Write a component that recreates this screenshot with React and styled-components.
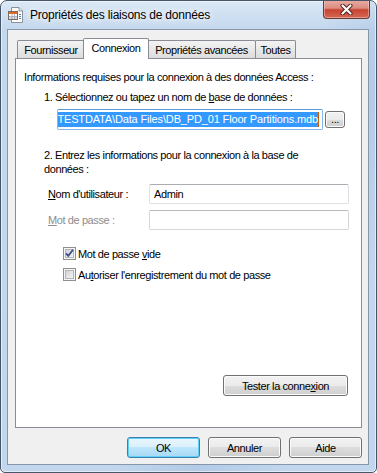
import styled, { createGlobalStyle } from "styled-components"

const GlobalStyle = createGlobalStyle`
    html, body {
        margin: 0;
        padding: 0;
        background: #ffffff;
    }
    body {
        font-family: "Liberation Sans", Arial, sans-serif;
        font-size: 11px;
        letter-spacing: -0.4px;
        color: #000000;
    }
`

const tabs = [
    { label: "Fournisseur", width: 68 },
    { label: "Connexion", width: 66, active: true },
    { label: "Propriétés avancées", width: 109 },
    { label: "Toutes", width: 41 },
]

function AppIcon() {
    return (
        <svg width="16" height="16" viewBox="0 0 16 16">
            <path d="M3.5 0.5 H11 L14.5 4 V15.5 H3.5 Z" fill="#fdfdfd" stroke="#8a8f98" />
            <path d="M11 0.5 V4 H14.5" fill="#e6e8ec" stroke="#8a8f98" />
            <rect x="0.5" y="4.5" width="9" height="8" fill="#ffffff" stroke="#7d6a5a" />
            <rect x="1" y="5" width="8" height="2" fill="#e06a2a" />
            <path d="M1 9.5 H9 M1 11 H9 M4 7 V12 M6.5 7 V12" stroke="#9aa6b8" strokeWidth="0.8" />
            <path d="M11 7.5 H13 M11 9.5 H13 M11 11.5 H13" stroke="#5b7fb8" />
        </svg>
    )
}

function CloseGlyph() {
    return (
        <svg width="13" height="11" viewBox="0 0 13 11">
            <path d="M2.5 1.5 L10.5 9.5 M10.5 1.5 L2.5 9.5" stroke="#4a1f1a" strokeWidth="4" strokeLinecap="round" />
            <path d="M2.5 1.5 L10.5 9.5 M10.5 1.5 L2.5 9.5" stroke="#ffffff" strokeWidth="2.2" strokeLinecap="round" />
        </svg>
    )
}

function CheckBox({ checked }) {
    return (
        <svg width="13" height="13" viewBox="0 0 13 13">
            <defs>
                <linearGradient id="cbfill" x1="0" y1="0" x2="1" y2="1">
                    <stop offset="0" stopColor="#cdd0d4" />
                    <stop offset="1" stopColor="#f7f7f7" />
                </linearGradient>
            </defs>
            <rect x="0.5" y="0.5" width="12" height="12" fill="#f4f4f4" stroke="#8e8f8f" />
            <rect x="2.5" y="2.5" width="8" height="8" fill="url(#cbfill)" stroke="#b3b6ba" />
            {checked && (
                <path d="M3 6.3 L5.3 8.8 L10 2.8" fill="none" stroke="#3d4f8a" strokeWidth="1.8" />
            )}
        </svg>
    )
}

export default function App() {
    return (
        <>
            <GlobalStyle />
            <Window>
                <TitleBar>
                    <AppIcon />
                    <Title>Propriétés des liaisons de données</Title>
                    <CloseButton><CloseGlyph /></CloseButton>
                </TitleBar>
                <Client>
                    <TabStrip>
                        {tabs.map((t) => (
                            <Tab key={t.label} $w={t.width} $active={t.active}>{t.label}</Tab>
                        ))}
                    </TabStrip>
                    <Panel>
                        <Line>Informations requises pour la connexion à des données Access :</Line>
                        <Line $indent={20} $top={7}>1. Sélectionnez ou tapez un nom de <U>b</U>ase de données :</Line>
                        <PathRow>
                            <PathInput>
                                <Selected>TESTDATA\Data Files\DB_PD_01 Floor Partitions.mdb</Selected>
                                <Caret />
                            </PathInput>
                            <SmallButton>...</SmallButton>
                        </PathRow>
                        <Line $indent={20} $top={18} $lh={14}>
                            2. Entrez les informations pour la connexion à la base de<br />données :
                        </Line>
                        <FieldRow $top={8}>
                            <FieldLabel><U>N</U>om d'utilisateur :</FieldLabel>
                            <TextBox>Admin</TextBox>
                        </FieldRow>
                        <FieldRow $top={6}>
                            <FieldLabel $disabled><U>M</U>ot de passe :</FieldLabel>
                            <TextBox $disabled />
                        </FieldRow>
                        <CheckRow $top={17}>
                            <CheckBox checked />
                            <span>Mot de passe <U>v</U>ide</span>
                        </CheckRow>
                        <CheckRow $top={8}>
                            <CheckBox />
                            <span>Au<U>t</U>oriser l'enregistrement du mot de passe</span>
                        </CheckRow>
                        <TestButton>Tester la conne<U>x</U>ion</TestButton>
                    </Panel>
                    <ButtonRow>
                        <Button $default>OK</Button>
                        <Button>Annuler</Button>
                        <Button>Aide</Button>
                    </ButtonRow>
                </Client>
            </Window>
        </>
    )
}

const Window = styled.div`
    width: 377px;
    height: 473px;
    box-sizing: border-box;
    border: 1px solid #46556a;
    border-radius: 7px 7px 5px 5px;
    background:
        linear-gradient(115deg, rgba(255,255,255,0) 55%, rgba(150,180,215,0.35) 70%, rgba(255,255,255,0) 85%),
        linear-gradient(180deg, #dbe8f6 0px, #cfe0f2 14px, #c4d8ee 29px, #c2d7ee 100%);
    box-shadow: inset 0 0 0 1px rgba(255,255,255,0.55);
    display: flex;
    flex-direction: column;
    padding: 0 7px 7px 6px;
    overflow: hidden;
`

const TitleBar = styled.div`
    height: 28px;
    flex: none;
    display: flex;
    align-items: flex-start;
    padding-left: 1px;

    & > svg:first-child {
        margin-top: 6px;
    }
`

const Title = styled.div`
    margin-top: 7px;
    margin-left: 6px;
    font-family: "Liberation Sans", Arial, sans-serif;
    font-size: 12px;
    letter-spacing: -0.2px;
    color: #000000;
    text-shadow: 0 0 6px #ffffff, 0 0 10px #ffffff;
`

const CloseButton = styled.div`
    margin-left: auto;
    margin-top: -1px;
    margin-right: -1px;
    width: 47px;
    height: 19px;
    box-sizing: border-box;
    border: 1px solid #6b3a36;
    border-top: none;
    border-radius: 0 0 4px 4px;
    background: linear-gradient(180deg, #e9ada4 0%, #dc8d80 45%, #c9432f 55%, #d26a55 100%);
    box-shadow: inset 0 0 0 1px rgba(255,220,210,0.45);
    display: flex;
    align-items: center;
    justify-content: center;
`

const Client = styled.div`
    flex: 1;
    box-sizing: border-box;
    border: 1px solid #8796ab;
    background: #f0f0f0;
    display: flex;
    flex-direction: column;
    padding: 0 6px 0 7px;
`

const TabStrip = styled.div`
    height: 28px;
    display: flex;
    align-items: flex-end;
    padding-left: 2px;
    position: relative;
    z-index: 1;
`

const Tab = styled.div`
    box-sizing: border-box;
    width: ${(p) => p.$w}px;
    height: ${(p) => (p.$active ? 21 : 18)}px;
    margin-left: ${(p) => (p.$active ? -2 : -1)}px;
    margin-right: ${(p) => (p.$active ? -1 : 0)}px;
    margin-bottom: ${(p) => (p.$active ? -1 : 0)}px;
    border: 1px solid #898c95;
    border-bottom: none;
    border-radius: 2px 2px 0 0;
    background: ${(p) => (p.$active ? "#ffffff" : "linear-gradient(180deg, #f3f3f3 0%, #e8e8e8 50%, #dddddd 100%)")};
    position: relative;
    z-index: ${(p) => (p.$active ? 2 : 1)};
    display: flex;
    align-items: center;
    justify-content: center;
    padding-bottom: ${(p) => (p.$active ? 2 : 0)}px;
    white-space: nowrap;

    &:first-child {
        margin-left: 0;
    }
`

const Panel = styled.div`
    height: 370px;
    flex: none;
    box-sizing: border-box;
    border: 1px solid #898c95;
    background: #ffffff;
    display: flex;
    flex-direction: column;
    padding: 12px 0 31px 8px;
`

const Line = styled.div`
    margin-top: ${(p) => p.$top || 0}px;
    margin-left: ${(p) => p.$indent || 0}px;
    line-height: ${(p) => p.$lh || 13}px;
    white-space: nowrap;
`

const U = styled.span`
    text-decoration: underline;
`

const PathRow = styled.div`
    margin-top: 5px;
    margin-left: 33px;
    display: flex;
    align-items: center;
`

const PathInput = styled.div`
    width: 266px;
    height: 21px;
    box-sizing: border-box;
    border: 1px solid #84b5e6;
    border-top-color: #5c9ad6;
    border-radius: 2px;
    background: #ffffff;
    display: flex;
    align-items: center;
    justify-content: flex-end;
    padding-right: 3px;
    overflow: hidden;
`

const Selected = styled.span`
    background: #3399ff;
    color: #ffffff;
    letter-spacing: -0.15px;
    line-height: 15px;
    white-space: nowrap;
`

const Caret = styled.span`
    width: 1px;
    height: 15px;
    background: #cc5c00;
    flex: none;
`

const SmallButton = styled.div`
    margin-left: 2px;
    width: 20px;
    height: 17px;
    box-sizing: border-box;
    border: 1px solid #707070;
    border-radius: 3px;
    background: linear-gradient(180deg, #f2f2f2 0%, #ebebeb 50%, #dddddd 50%, #cfcfcf 100%);
    box-shadow: inset 0 0 0 1px #fbfbfb;
    display: flex;
    justify-content: center;
    align-items: center;
    line-height: 10px;
    padding-bottom: 2px;
`

const FieldRow = styled.div`
    margin-top: ${(p) => p.$top}px;
    margin-left: 24px;
    display: flex;
    align-items: center;
`

const FieldLabel = styled.div`
    width: 101px;
    color: ${(p) => (p.$disabled ? "#8d8d8d" : "#000000")};
`

const TextBox = styled.div`
    width: 200px;
    height: 20px;
    box-sizing: border-box;
    border: 1px solid ${(p) => (p.$disabled ? "#d4d6da" : "#dde1e6")};
    border-top-color: ${(p) => (p.$disabled ? "#b7b9be" : "#abadb3")};
    border-radius: 2px;
    background: #ffffff;
    padding: 0 4px;
    display: flex;
    align-items: center;
`

const CheckRow = styled.div`
    margin-top: ${(p) => p.$top}px;
    margin-left: 39px;
    display: flex;
    align-items: center;
    gap: 2px;
    height: 13px;
    white-space: nowrap;

    & > svg {
        flex: none;
    }
`

const buttonBase = `
    box-sizing: border-box;
    height: 21px;
    border-radius: 3px;
    display: flex;
    align-items: center;
    justify-content: center;
    white-space: nowrap;
`

const TestButton = styled.div`
    ${buttonBase}
    margin-top: auto;
    align-self: flex-end;
    margin-right: 13px;
    width: 125px;
    border: 1px solid #707070;
    background: linear-gradient(180deg, #f2f2f2 0%, #ebebeb 50%, #dddddd 50%, #cfcfcf 100%);
    box-shadow: inset 0 0 0 1px #fbfbfb;
`

const ButtonRow = styled.div`
    margin-top: 9px;
    display: flex;
    justify-content: flex-end;
    gap: 8px;
`

const Button = styled.div`
    ${buttonBase}
    width: 73px;
    border: 1px solid ${(p) => (p.$default ? "#3c7fb1" : "#707070")};
    background: ${(p) =>
        p.$default
            ? "linear-gradient(180deg, #eaf6fd 0%, #d9f0fc 50%, #bee6fd 50%, #a7d9f5 100%)"
            : "linear-gradient(180deg, #f2f2f2 0%, #ebebeb 50%, #dddddd 50%, #cfcfcf 100%)"};
    box-shadow: inset 0 0 0 1px ${(p) => (p.$default ? "#5fd0f5" : "#fbfbfb")};
`
